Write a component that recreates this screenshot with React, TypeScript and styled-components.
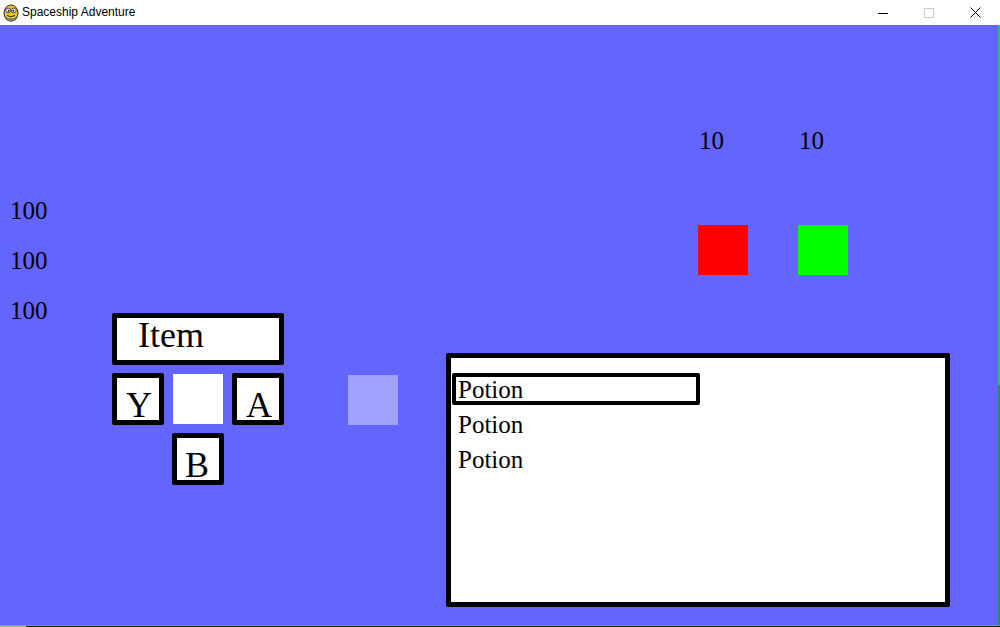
import React from "react";
import styled, { createGlobalStyle } from "styled-components";

const GlobalStyle = createGlobalStyle`
  html, body { margin: 0; padding: 0; background: #1e1e1e; }
  #root { width: 1000px; height: 627px; overflow: hidden; }
`;

const Window = styled.div`
  width: 1000px;
  height: 627px;
  display: flex;
  flex-direction: column;
  background: #ffffff;
`;

const TitleBar = styled.div`
  height: 25px;
  display: flex;
  align-items: center;
  background: #ffffff;
  font-family: "Liberation Sans", Arial, sans-serif;
  font-size: 12px;
  color: #000;
`;

const AppIcon = styled.svg`
  width: 16px;
  height: 18px;
  margin: 0 3px 0 3px;
  flex: none;
`;

const Title = styled.span`
  flex: 1;
  line-height: 25px;
  white-space: nowrap;
`;

const Controls = styled.div`
  display: flex;
  height: 25px;
  margin-right: 2px;
`;

const ControlButton = styled.div`
  width: 46px;
  height: 25px;
  display: flex;
  align-items: center;
  justify-content: center;
`;

const EdgeRight = styled.div`
  width: 2px;
  align-self: stretch;
  background: linear-gradient(#1ec47c 0 60%, #2a8a60 60% 100%);
`;

const Body = styled.div`
  display: flex;
  height: 600px;
`;

const Canvas = styled.div`
  position: relative;
  width: 998px;
  height: 600px;
  background: #6464ff;
  font-family: "Liberation Serif", "Times New Roman", serif;
  color: #000;
`;

const BottomEdge = styled.div`
  height: 2px;
  background: linear-gradient(#25c48a 0 1px, transparent 1px),
    linear-gradient(90deg, #b4b4b4 0 26px, #1e1e1e 26px);
`;

const StatColumn = styled.div`
  position: absolute;
  left: 10px;
  top: 161px;
  display: flex;
  flex-direction: column;
`;

const StatValue = styled.div`
  font-size: 25px;
  line-height: 50px;
`;

const Gauges = styled.div`
  position: absolute;
  left: 698px;
  top: 104px;
  display: flex;
  gap: 50px;
`;

const Gauge = styled.div`
  width: 50px;
  display: flex;
  flex-direction: column;
  gap: 72px;
`;

const GaugeLabel = styled.div`
  padding-left: 1px;
  font-size: 25px;
  line-height: 24px;
  white-space: nowrap;
`;

const GaugeSwatch = styled.div<{ $color: string }>`
  width: 50px;
  height: 50px;
  background: ${(p) => p.$color};
`;

const Controller = styled.div`
  position: absolute;
  left: 112px;
  top: 288px;
  display: flex;
  flex-direction: column;
  gap: 8px;
  width: 172px;
`;

const ItemBox = styled.div`
  box-sizing: border-box;
  height: 52px;
  border: 5px solid #000;
  border-radius: 2px;
  background: #fff;
  padding-left: 21px;
  font-size: 36px;
  line-height: 34px;
`;

const ButtonGrid = styled.div`
  display: grid;
  grid-template-columns: repeat(3, 52px);
  grid-auto-rows: 52px;
  gap: 8px;
`;

const FaceButton = styled.div<{ $col: number; $row: number; $shift?: number }>`
  grid-column: ${(p) => p.$col};
  grid-row: ${(p) => p.$row};
  box-sizing: border-box;
  border: 5px solid #000;
  border-radius: 2px;
  background: #fff;
  padding-top: 10px;
  padding-left: ${(p) => Math.max(0, (p.$shift ?? 0) * 2)}px;
  padding-right: ${(p) => Math.max(0, -(p.$shift ?? 0) * 2)}px;
  text-align: center;
  font-size: 36px;
  line-height: 34px;
`;

const CenterPad = styled.div`
  grid-column: 2;
  grid-row: 1;
  display: flex;
  align-items: center;
  justify-content: center;
  &::before {
    content: "";
    width: 50px;
    height: 50px;
    background: #fff;
  }
`;

const Ghost = styled.div`
  position: absolute;
  left: 348px;
  top: 350px;
  width: 50px;
  height: 50px;
  background: #a0a0ff;
`;

const Inventory = styled.div`
  position: absolute;
  left: 446px;
  top: 328px;
  width: 504px;
  height: 254px;
  box-sizing: border-box;
  border: 5px solid #000;
  border-radius: 2px;
  background: #fff;
  padding: 15px 0 0 1px;
  display: flex;
  flex-direction: column;
  gap: 3px;
`;

const InventoryRow = styled.div<{ $selected?: boolean }>`
  box-sizing: border-box;
  width: 248px;
  height: 32px;
  border: 4px solid ${(p) => (p.$selected ? "#000" : "transparent")};
  border-radius: 2px;
  padding-left: 2px;
  font-size: 25px;
  line-height: 26px;
  white-space: nowrap;
`;

const PygameIcon = () => (
  <AppIcon viewBox="0 0 16 18">
    <ellipse cx="8" cy="9" rx="7" ry="8" fill="#f2c81e" stroke="#2a2a2a" strokeWidth="1" />
    <circle cx="5.2" cy="6.5" r="2.4" fill="#fff" stroke="#222" strokeWidth="0.8" />
    <circle cx="10.8" cy="6.5" r="2.4" fill="#fff" stroke="#222" strokeWidth="0.8" />
    <circle cx="5.6" cy="6.8" r="1" fill="#111" />
    <circle cx="10.4" cy="6.8" r="1" fill="#111" />
    <path d="M4 11.5 Q8 14 12 11.5" fill="none" stroke="#222" strokeWidth="1" />
    <path d="M2 13 Q3 17 7 17 L9 17 Q13 17 14 13 Q11 15.5 8 15 Q5 15.5 2 13 Z" fill="#9a9a9a" stroke="#333" strokeWidth="0.6" />
  </AppIcon>
);

export default function App() {
  const items = ["Potion", "Potion", "Potion"];
  return (
    <>
      <GlobalStyle />
      <Window>
        <TitleBar>
          <PygameIcon />
          <Title>Spaceship Adventure</Title>
          <Controls>
            <ControlButton>
              <svg width="10" height="10" viewBox="0 0 10 10">
                <path d="M0 5.5 H10" stroke="#000" strokeWidth="1" />
              </svg>
            </ControlButton>
            <ControlButton>
              <svg width="10" height="10" viewBox="0 0 10 10">
                <rect x="0.5" y="0.5" width="9" height="9" fill="none" stroke="#cccccc" strokeWidth="1" />
              </svg>
            </ControlButton>
            <ControlButton>
              <svg width="11" height="11" viewBox="0 0 11 11">
                <path d="M0.5 0.5 L10.5 10.5 M10.5 0.5 L0.5 10.5" stroke="#000" strokeWidth="1" />
              </svg>
            </ControlButton>
          </Controls>
        </TitleBar>
        <Body>
          <Canvas>
            <StatColumn>
              <StatValue>100</StatValue>
              <StatValue>100</StatValue>
              <StatValue>100</StatValue>
            </StatColumn>
            <Gauges>
              <Gauge>
                <GaugeLabel>10</GaugeLabel>
                <GaugeSwatch $color="#ff0000" />
              </Gauge>
              <Gauge>
                <GaugeLabel>10</GaugeLabel>
                <GaugeSwatch $color="#00ff00" />
              </Gauge>
            </Gauges>
            <Controller>
              <ItemBox>Item</ItemBox>
              <ButtonGrid>
                <FaceButton $col={1} $row={1} $shift={1}>Y</FaceButton>
                <CenterPad />
                <FaceButton $col={3} $row={1} $shift={1}>A</FaceButton>
                <FaceButton $col={2} $row={2} $shift={-1}>B</FaceButton>
              </ButtonGrid>
            </Controller>
            <Ghost />
            <Inventory>
              {items.map((name, i) => (
                <InventoryRow key={i} $selected={i === 0}>
                  {name}
                </InventoryRow>
              ))}
            </Inventory>
          </Canvas>
          <EdgeRight />
        </Body>
        <BottomEdge />
      </Window>
    </>
  );
}
